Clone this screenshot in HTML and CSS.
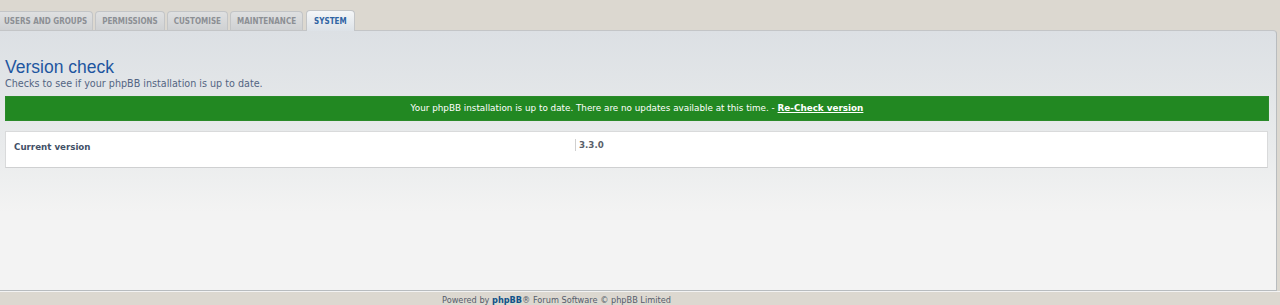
FILE: index.html
```html
<!DOCTYPE html>
<html>
<head>
    <meta charset="utf-8">
    <link rel="stylesheet" href="styles.css">
</head>
<body>
    <div class="tabs">
        <a class="tab">USERS AND GROUPS</a>
        <a class="tab">PERMISSIONS</a>
        <a class="tab">CUSTOMISE</a>
        <a class="tab">MAINTENANCE</a>
        <a class="tab active">SYSTEM</a>
    </div>

    <div class="panel">
        <h1>Version check</h1>
        <p class="explain">Checks to see if your phpBB installation is up to date.</p>

        <div class="successbox">
            Your phpBB installation is up to date. There are no updates available at this time. - <a class="recheck">Re-Check version</a>
        </div>

        <div class="fieldset">
            <div class="row">
                <div class="label">Current version</div>
                <div class="value">3.3.0</div>
            </div>
        </div>
    </div>

    <div class="footer">
        Powered by <a class="brand">phpBB</a>&reg; Forum Software &copy; phpBB Limited
    </div>
</body>
</html>
```

FILE: styles.css
```css
body { margin:0; background-color:#dcd8d0; font-family:"DejaVu Sans", Verdana, sans-serif; }

.tabs { display:flex; align-items:flex-end; gap:2px; padding-top:11px; height:19px; position:relative; z-index:1; }
.tab { display:block; height:18px; line-height:19px; padding:0 6px; font-family:"DejaVu Sans Condensed", "DejaVu Sans", sans-serif; font-size:8px; font-weight:bold; color:#8c8f94;
       background:linear-gradient(#dfe0e1, #cfd1d3); border:1px solid #c3c5c7; border-bottom:none; border-radius:4px 4px 0 0; }
.tab:first-child { border-left:none; border-radius:0 4px 0 0; padding-left:4px; padding-right:5px; }
.tab.active { height:20px; line-height:21px; color:#2f64a3; background:linear-gradient(#f4f6f8, #dde2e7); margin-left:1px; padding:0 7px; margin-bottom:-1px; }

.panel { width:1277px; height:261px; box-sizing:border-box; padding:0 7px 0 5px; border:1px solid #b8bcbf; border-left:none; border-top-color:#c3c5c7;
         border-radius:0 4px 0 0; background:linear-gradient(#dce0e4, #e9ebec 45%, #f3f3f3 70%, #f3f3f3); display:flex; flex-direction:column; }

h1 { margin:26px 0 0 0; font-family:"Liberation Sans", Arial, sans-serif; font-size:17.5px; font-weight:normal; color:#1e56a0; line-height:20px; }
.explain { margin:0; font-size:9.6px; color:#536482; line-height:14px; }

.successbox { margin-top:5px; height:23px; line-height:23px; background-color:#228822; border:1px solid #2a8a2a; color:#fff; text-align:center; font-size:8.8px; }
.recheck { font-weight:bold; text-decoration:underline; color:#fff; }

.fieldset { margin-top:10px; margin-right:1px; background-color:#fff; border:1px solid #d9dadb; border-bottom-color:#cfd0d1; }
.row { display:flex; height:35px; }
.label { width:561px; padding:10px 0 0 8px; font-size:8.7px; font-weight:bold; color:#425067; line-height:11px; }
.value { margin-top:7px; height:12px; padding-left:3px; border-left:1px solid #d0d0d0; font-size:8.7px; font-weight:bold; color:#5a5f6a; line-height:12px; }

.footer { padding:3px 0 0 442px; font-size:8.2px; color:#555c6b; line-height:11px; border-top:1px solid #f3f3f3; }
.brand { font-weight:bold; color:#105289; }
```
